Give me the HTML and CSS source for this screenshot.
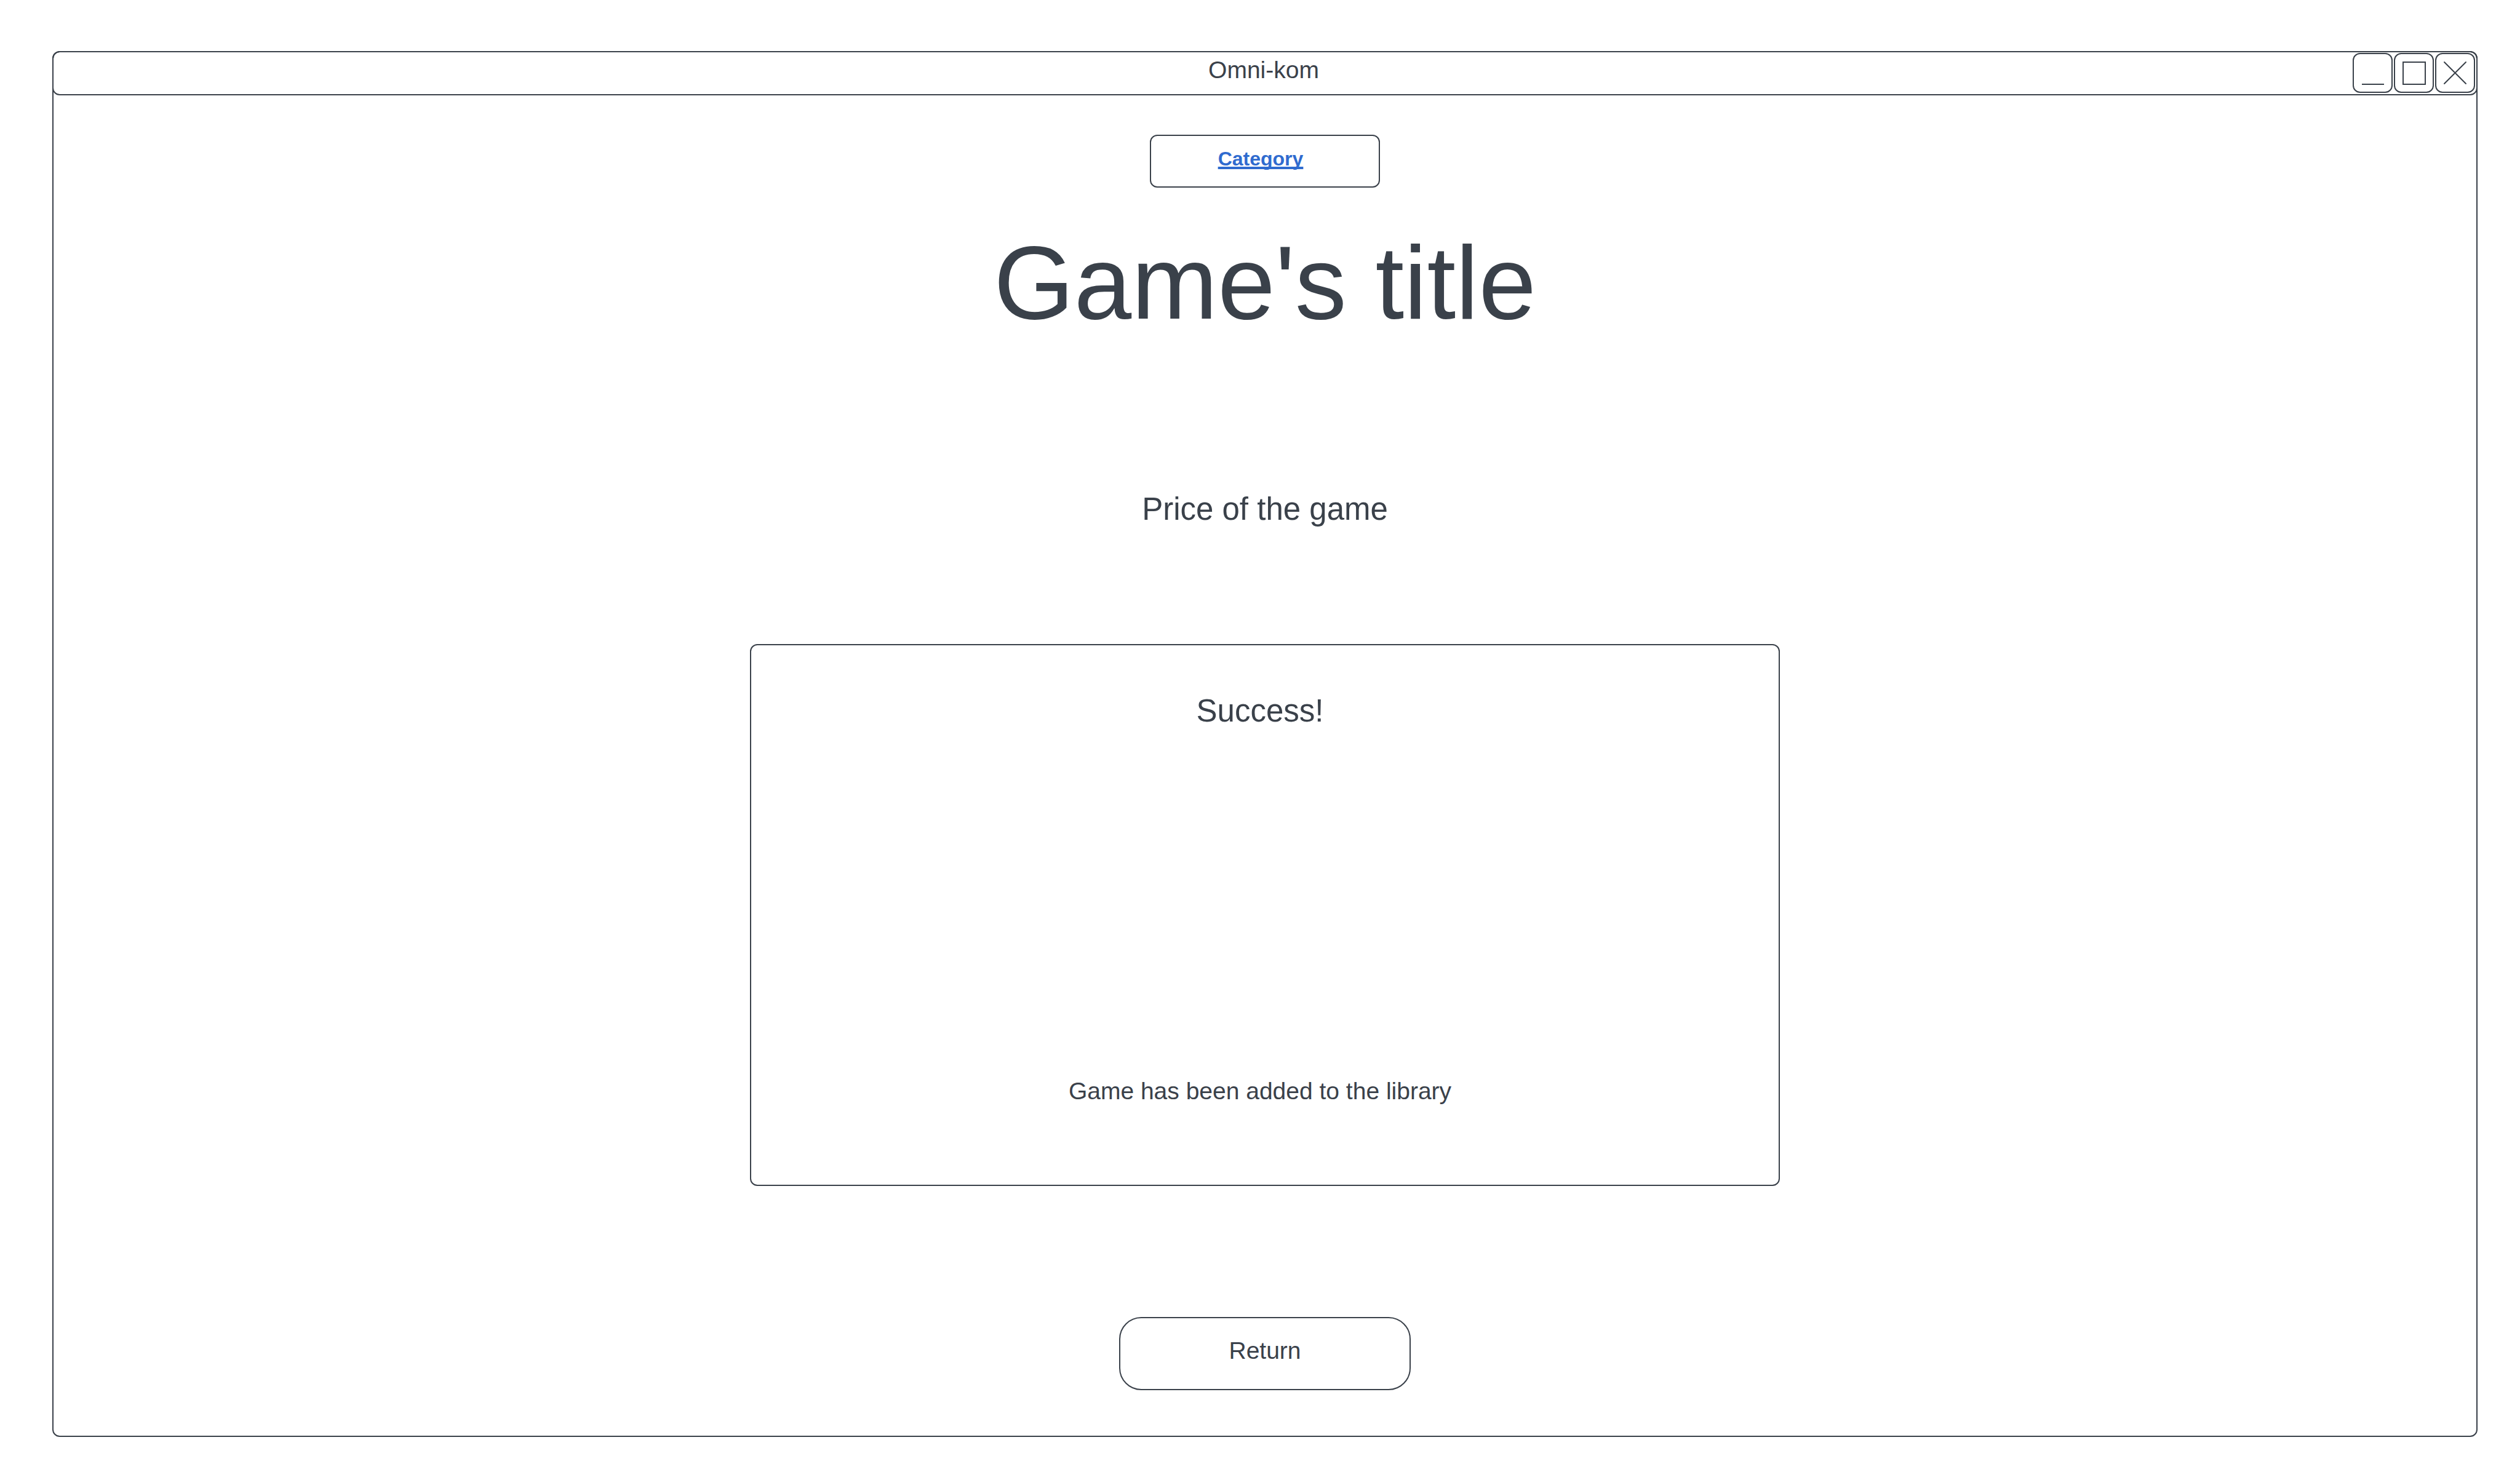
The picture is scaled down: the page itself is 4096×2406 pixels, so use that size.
FILE: index.html
```html
<!DOCTYPE html>
<html lang="en">
<head>
<meta charset="utf-8">
<title>Omni-kom</title>
<link rel="stylesheet" href="styles.css">
</head>
<body>
<div class="window">
  <header class="titlebar">
    <span class="titlebar-name">Omni-kom</span>
    <div class="controls">
      <button class="control" type="button" aria-label="Minimize">
        <svg class="icon" viewBox="0 0 61 61"><path d="M13 49H49"/></svg>
      </button>
      <button class="control" type="button" aria-label="Maximize">
        <svg class="icon" viewBox="0 0 61 61"><path d="M13 13H49V49H13Z"/></svg>
      </button>
      <button class="control" type="button" aria-label="Close">
        <svg class="icon" viewBox="0 0 61 61"><path d="M13 13L48 48M48 13L13 48" stroke-linecap="round"/></svg>
      </button>
    </div>
  </header>
  <main class="content">
    <nav class="category"><a class="category-link" href="#category">Category</a></nav>
    <h1 class="title">Game's title</h1>
    <p class="price">Price of the game</p>
    <section class="notice">
      <h2 class="notice-title">Success!</h2>
      <p class="notice-text">Game has been added to the library</p>
    </section>
    <button class="return" type="button">Return</button>
  </main>
</div>
</body>
</html>
```
FILE: styles.css
```css
:root {
  --ink: #3a414a;
  --link: #2f6bcf;
  --line: 2px solid var(--ink);
  --radius: 12px;
}

* {
  box-sizing: border-box;
}

body {
  margin: 0;
  min-height: 100vh;
  display: flex;
  padding: 83px 69px 70px 85px;
  background: #fff;
  color: var(--ink);
  font-family: "Liberation Sans", Arial, sans-serif;
  font-size: 39px;
  line-height: 44px;
}

h1,
h2,
p {
  margin: 0;
  font-weight: 400;
}

button {
  font: inherit;
  color: inherit;
  background: #fff;
  border: var(--line);
}

.window {
  flex: 1;
  display: flex;
  flex-direction: column;
  border: var(--line);
  border-radius: var(--radius);
}

/* The bar's own outline runs over the window's outline */
.titlebar {
  display: grid;
  grid-template-columns: 1fr auto 1fr;
  height: 72px;
  margin: -2px -2px 0;
  border: var(--line);
  border-radius: var(--radius);
}

.titlebar-name {
  grid-column: 2;
  padding: 7px 4px 0 0;
}

.controls {
  display: flex;
  justify-content: flex-end;
  gap: 2px;
  padding: 1px 2px 0 0;
}

.control {
  width: 65px;
  height: 65px;
  padding: 0;
  border-radius: var(--radius);
}

.icon {
  display: block;
  fill: none;
  stroke: currentColor;
  stroke-width: 2;
}

.content {
  flex: 1;
  display: flex;
  flex-direction: column;
  align-items: center;
  padding: 64px 48px 74px;
  text-align: center;
}

.category {
  width: 374px;
  padding: 19px 14px 27px 0;
  border: var(--line);
  border-radius: var(--radius);
  font-size: 32px;
  font-weight: 700;
  line-height: 36px;
}

.category-link {
  color: var(--link);
  text-decoration-thickness: 4px;
  text-underline-offset: 2px;
  text-decoration-skip-ink: none;
}

.title {
  margin-top: 59px;
  font-size: 168px;
  line-height: 192px;
}

.price {
  margin-top: 243px;
  font-size: 51px;
  line-height: 58px;
}

.notice {
  display: flex;
  flex-direction: column;
  gap: 567px;
  width: 100%;
  max-width: 1674px;
  margin-top: 190px;
  padding: 78px 16px 130px 0;
  border: var(--line);
  border-radius: var(--radius);
}

.notice-title {
  font-size: 51px;
  line-height: 58px;
}

.return {
  width: 474px;
  margin-top: 213px;
  padding: 31px 0 40px;
  border-radius: 36px;
}
```
